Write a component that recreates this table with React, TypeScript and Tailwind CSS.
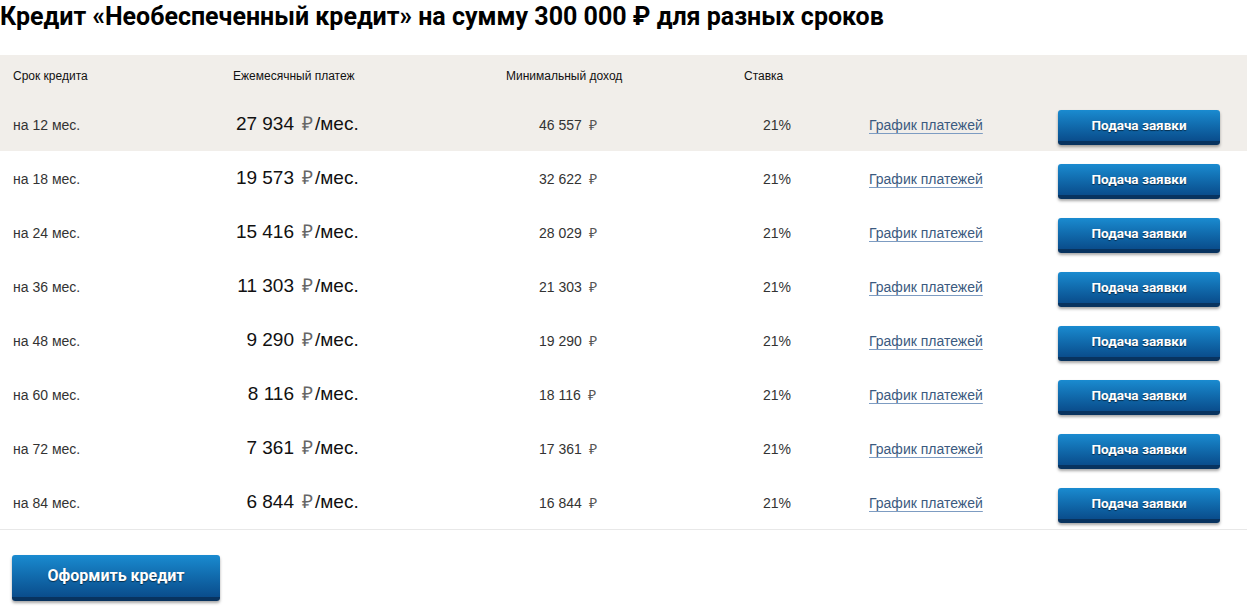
const rows = [
  { term: 12, pay: "27 934", income: "46 557" },
  { term: 18, pay: "19 573", income: "32 622" },
  { term: 24, pay: "15 416", income: "28 029" },
  { term: 36, pay: "11 303", income: "21 303" },
  { term: 48, pay: "9 290", income: "19 290" },
  { term: 60, pay: "8 116", income: "18 116" },
  { term: 72, pay: "7 361", income: "17 361" },
  { term: 84, pay: "6 844", income: "16 844" },
];

const arial = "font-['Liberation_Sans',Arial,sans-serif]";
const din = "font-['Roboto','Liberation_Sans',sans-serif]";

function BlueButton({ label, big }: { label: string; big?: boolean }) {
  return (
    <button
      className={`${din} flex items-center justify-center rounded-[3px] border-b-[4px] border-[#08335f] bg-linear-to-b from-[#1a8bd0] to-[#0a4d8c] font-bold text-white shadow-[0_2px_3px_rgba(0,0,0,0.35)] [text-shadow:0_1px_1px_rgba(0,0,0,0.55)] ${
        big ? "h-[46px] w-[208px] text-[16px]" : "mt-[6px] h-[35px] w-[162px] text-[13.5px]"
      }`}
    >
      {label}
    </button>
  );
}

export default function App() {
  return (
    <div className={`${arial} min-h-[608px] w-[1247px] bg-white text-[#222]`}>
      <h1 className={`${din} h-[55px] pt-[2px] text-[25px] leading-[30px] font-bold text-black`}>
        Кредит «Необеспеченный кредит» на сумму 300 000 ₽ для разных сроков
      </h1>

      <div className="border-b border-[#e8e8e8]">
        <div className="flex h-[42px] items-center bg-[#f1eeea] text-[12px] text-[#111]">
          <div className="w-[200px] pl-[13px]">Срок кредита</div>
          <div className="w-[230px] pl-[33px]">Ежемесячный платеж</div>
          <div className="w-[250px] pl-[76px]">Минимальный доход</div>
          <div className="w-[140px] pl-[64px]">Ставка</div>
        </div>

        {rows.map((r, i) => (
          <div
            key={r.term}
            className={`flex h-[54px] items-center ${i === 0 ? "bg-[#f1eeea]" : "bg-white"}`}
          >
            <div className="w-[200px] pt-[2px] pl-[13px] text-[14px] text-[#333]">на {r.term} мес.</div>
            <div className="flex w-[230px] items-baseline pl-[33px] text-[19px] text-[#111]">
              <span className="w-[61px] text-right">{r.pay}</span>
              <span className="ml-[8px] text-[#666]">₽</span>
              <span className="ml-[2px]">/мес.</span>
            </div>
            <div className="w-[250px] pt-[2px] pl-[109px] text-[14px] text-[#333]">
              {r.income}
              <span className="ml-[7px] text-[#555]">₽</span>
            </div>
            <div className="w-[140px] pt-[2px] pl-[83px] text-[14px] text-[#333]">21%</div>
            <div className="w-[238px] pt-[2px] pl-[49px]">
              <a
                href="#"
                className="text-[14px] text-[#3b5a80] underline decoration-[#7d9cc2] underline-offset-[3px]"
              >
                График платежей
              </a>
            </div>
            <BlueButton label="Подача заявки" />
          </div>
        ))}
      </div>

      <div className="pt-[25px] pl-[12px]">
        <BlueButton label="Оформить кредит" big />
      </div>
    </div>
  );
}
